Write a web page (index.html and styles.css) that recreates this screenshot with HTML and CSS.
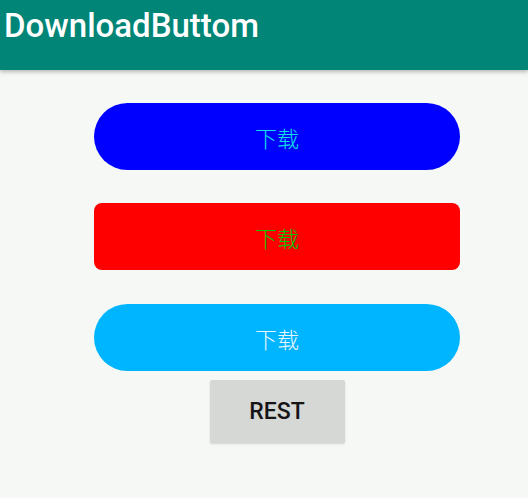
FILE: index.html
```html
<!DOCTYPE html>
<html>
<head>
<meta charset="utf-8">
<link rel="stylesheet" href="styles.css">
</head>
<body>
<header class="appbar"><h1 class="title">DownloadButtom</h1></header>
<main class="content">
  <button class="dl dl-blue">下载</button>
  <button class="dl dl-red">下载</button>
  <button class="dl dl-sky">下载</button>
  <button class="rest">REST</button>
</main>
</body>
</html>
```
FILE: styles.css
```css
html, body { margin: 0; padding: 0; }
body {
  background: #f5f8f5;
  font-family: Roboto, "Noto Sans CJK SC", sans-serif;
  width: 528px;
  height: 498px;
  overflow: hidden;
}
.appbar {
  height: 70px;
  background: #008577;
  box-shadow: 0 2px 4px rgba(0,0,0,0.25);
  display: flex;
  align-items: flex-start;
  padding-left: 4px;
}
.title {
  margin: 8px 0 0 0;
  color: #ffffff;
  font-size: 33px;
  font-weight: 500;
  line-height: 36px;
}
.content {
  display: flex;
  flex-direction: column;
  align-items: center;
  padding-top: 33px;
  padding-left: 26px;
}
.dl {
  width: 366px;
  height: 67px;
  border: none;
  font-family: "Noto Sans CJK SC", sans-serif;
  font-size: 22px;
  font-weight: 300;
  padding: 0;
  margin-bottom: 33px;
}
.dl-blue { background: #0000ff; color: #10e0e8; border-radius: 34px; }
.dl-red { background: #ff0000; color: #00c800; border-radius: 8px; margin-bottom: 34px; }
.dl-sky { background: #00b5ff; color: #eaf6ff; border-radius: 34px; margin-bottom: 9px; }
.rest {
  width: 135px;
  height: 63px;
  border: none;
  background: #d6d8d5;
  color: #151515;
  font-family: Roboto, sans-serif;
  font-weight: 500;
  font-size: 23px;
  border-radius: 2px;
  box-shadow: 0 1px 2px rgba(0,0,0,0.15);
  padding: 0;
}
```
